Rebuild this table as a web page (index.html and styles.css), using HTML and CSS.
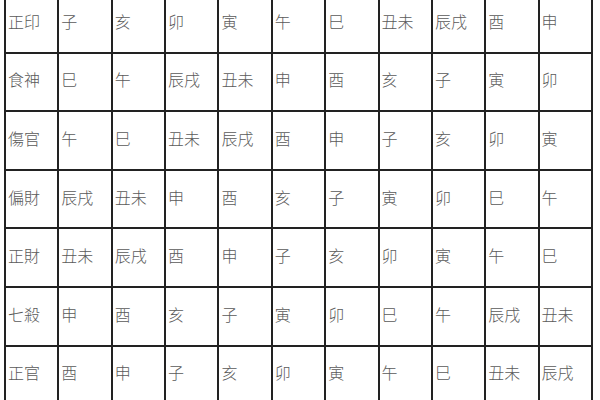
FILE: index.html
```html
<!DOCTYPE html>
<html lang="zh-Hant">
<head>
<meta charset="utf-8">
<link rel="stylesheet" href="styles.css">
</head>
<body>
<table class="grid">
<tr><td>正印</td><td>子</td><td>亥</td><td>卯</td><td>寅</td><td>午</td><td>巳</td><td>丑未</td><td>辰戌</td><td>酉</td><td>申</td></tr>
<tr><td>食神</td><td>巳</td><td>午</td><td>辰戌</td><td>丑未</td><td>申</td><td>酉</td><td>亥</td><td>子</td><td>寅</td><td>卯</td></tr>
<tr><td>傷官</td><td>午</td><td>巳</td><td>丑未</td><td>辰戌</td><td>酉</td><td>申</td><td>子</td><td>亥</td><td>卯</td><td>寅</td></tr>
<tr><td>偏財</td><td>辰戌</td><td>丑未</td><td>申</td><td>酉</td><td>亥</td><td>子</td><td>寅</td><td>卯</td><td>巳</td><td>午</td></tr>
<tr><td>正財</td><td>丑未</td><td>辰戌</td><td>酉</td><td>申</td><td>子</td><td>亥</td><td>卯</td><td>寅</td><td>午</td><td>巳</td></tr>
<tr><td>七殺</td><td>申</td><td>酉</td><td>亥</td><td>子</td><td>寅</td><td>卯</td><td>巳</td><td>午</td><td>辰戌</td><td>丑未</td></tr>
<tr><td>正官</td><td>酉</td><td>申</td><td>子</td><td>亥</td><td>卯</td><td>寅</td><td>午</td><td>巳</td><td>丑未</td><td>辰戌</td></tr>
</table>
</body>
</html>
```
FILE: styles.css
```css
html, body {
  margin: 0;
  padding: 0;
  background: #ffffff;
  overflow: hidden;
}
body {
  font-family: "Noto Sans CJK TC", "Noto Sans CJK SC", sans-serif;
  color: #5a5a5a;
}
.grid {
  border-collapse: collapse;
  table-layout: fixed;
  width: 589px;
  margin: -7px 0 0 4px;
}
.grid tr {
  height: 58.6px;
}
.grid td {
  border: 2px solid #222222;
  padding: 0 0 5px 2px;
  font-size: 16px;
  font-weight: 300;
  line-height: 20px;
  vertical-align: middle;
  text-align: left;
  white-space: nowrap;
  overflow: hidden;
}
```
